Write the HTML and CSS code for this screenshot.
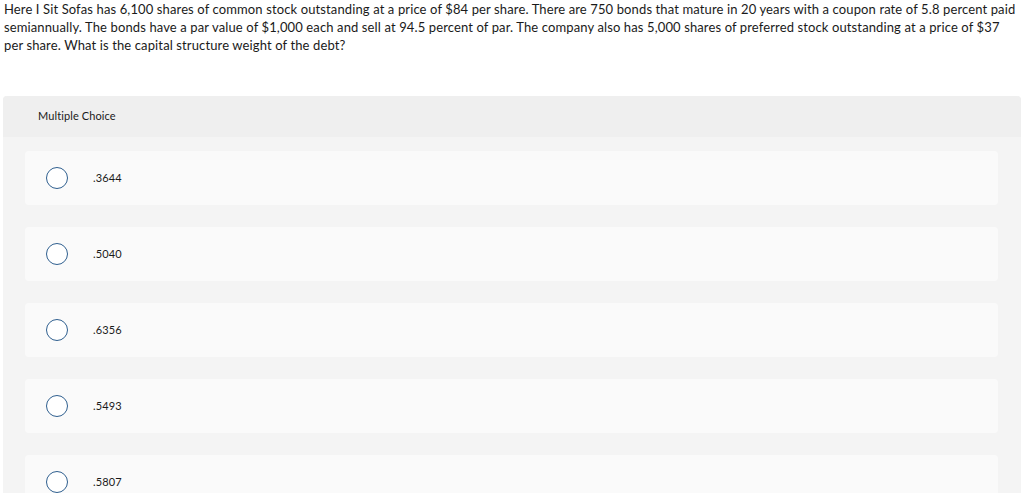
FILE: index.html
```html
<!DOCTYPE html>
<html>
<head>
<meta charset="utf-8">
<link rel="stylesheet" href="styles.css">
</head>
<body>
<p class="question">Here I Sit Sofas has 6,100 shares of common stock outstanding at a price of $84 per share. There are 750 bonds that mature in 20 years with a coupon rate of 5.8 percent paid semiannually. The bonds have a par value of $1,000 each and sell at 94.5 percent of par. The company also has 5,000 shares of preferred stock outstanding at a price of $37 per share. What is the capital structure weight of the debt?</p>
<section class="panel">
  <div class="panel-head">Multiple Choice</div>
  <div class="options">
    <div class="option"><span class="radio"></span><span class="label">.3644</span></div>
    <div class="option"><span class="radio"></span><span class="label">.5040</span></div>
    <div class="option"><span class="radio"></span><span class="label">.6356</span></div>
    <div class="option"><span class="radio"></span><span class="label">.5493</span></div>
    <div class="option"><span class="radio"></span><span class="label">.5807</span></div>
  </div>
</section>
</body>
</html>
```
FILE: styles.css
```css
html, body {
  margin: 0;
  padding: 0;
  background: #ffffff;
}
body {
  font-family: "Lato", "Noto Sans", sans-serif;
  color: #1a1a1a;
  overflow: hidden;
}
.question {
  margin: 0;
  padding: 0 3px 0 4px;
  font-size: 13px;
  line-height: 18px;
  letter-spacing: 0.12px;
}
.panel {
  margin: 42px 3px 0 3px;
  background: #f4f4f4;
  border-radius: 4px 4px 0 0;
}
.panel-head {
  background: #efefef;
  height: 41px;
  line-height: 39px;
  padding-left: 35px;
  font-size: 11px;
  letter-spacing: 0.1px;
  border-radius: 4px 4px 0 0;
}
.options {
  display: flex;
  flex-direction: column;
  gap: 22px;
  padding: 14px 23px 20px 22px;
}
.option {
  display: flex;
  align-items: center;
  height: 54px;
  background: #fafafa;
  border-radius: 4px;
}
.radio {
  box-sizing: border-box;
  width: 22px;
  height: 22px;
  border: 1.5px solid #2f5f8f;
  border-radius: 50%;
  margin-left: 21px;
  background: #fff;
}
.label {
  margin-left: 25px;
  margin-top: -1px;
  font-size: 11px;
  letter-spacing: 0.1px;
}
```
